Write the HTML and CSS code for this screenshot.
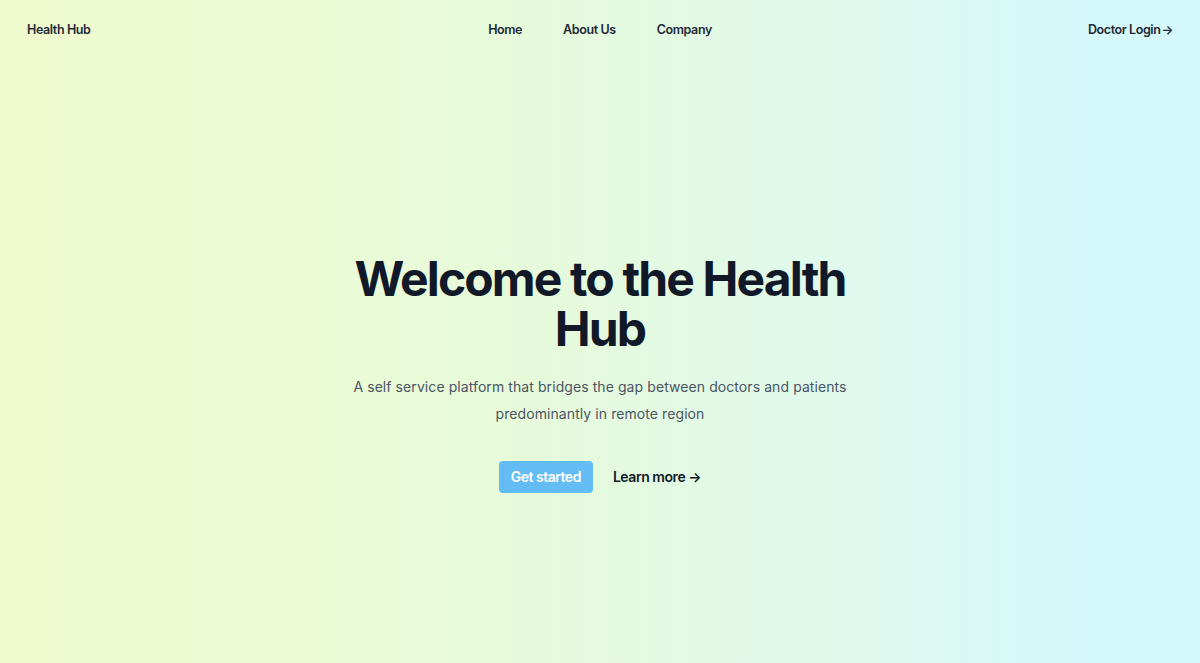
FILE: index.html
```html
<!DOCTYPE html>
<html lang="en">
<head>
<meta charset="utf-8">
<title>Health Hub</title>
<link rel="stylesheet" href="styles.css">
</head>
<body>
<div class="page">
  <header class="nav">
    <a class="brand" href="#">Health Hub</a>
    <nav class="links">
      <a href="#">Home</a>
      <a href="#">About Us</a>
      <a href="#">Company</a>
    </nav>
    <a class="login" href="#">Doctor Login<span class="arrow">→</span></a>
  </header>
  <main class="hero">
    <h1 class="title"><span class="line">Welcome to the Health</span><span class="line">Hub</span></h1>
    <p class="lead">A self service platform that bridges the gap between doctors and patients predominantly in remote region</p>
    <div class="actions">
      <a class="btn" href="#">Get started</a>
      <a class="more" href="#">Learn more <span>→</span></a>
    </div>
  </main>
</div>
</body>
</html>
```

FILE: styles.css
```css
* { box-sizing: border-box; }
html, body { margin: 0; padding: 0; height: 100%; }
body {
  font-family: Inter, "Noto Sans", sans-serif;
  color: #111827;
  background: linear-gradient(90deg, #effacd 0%, #eefbd2 11%, #e6fadb 45%, #dff9ec 70%, #d6f8fa 90%, #d4f8fc 100%);
}
a { text-decoration: none; color: inherit; }
.page { height: 663px; display: flex; flex-direction: column; }
.nav {
  display: flex;
  align-items: center;
  justify-content: space-between;
  padding: 19px 27px 17px;
  font-size: 12.5px;
  font-weight: 600;
  letter-spacing: -0.4px;
  line-height: 22px;
  color: #1f2937;
}
.brand, .login { flex: 1; }
.login { text-align: right; }
.links { display: flex; gap: 41px; }
.arrow { margin-left: 1px; }
.hero {
  display: flex;
  flex-direction: column;
  align-items: center;
  text-align: center;
  padding-top: 196px;
}
.title {
  margin: 0;
  display: flex;
  flex-direction: column;
  align-items: center;
  font-size: 48px;
  line-height: 50px;
  font-weight: 700;
  letter-spacing: -1.85px;
  color: #111827;
}
.line { display: block; }
.lead {
  margin: 19px 0 0;
  width: 520px;
  font-size: 14px;
  letter-spacing: 0.08px;
  line-height: 27px;
  color: #4b5563;
}
.actions {
  margin-top: 34px;
  display: flex;
  align-items: center;
  gap: 20px;
}
.btn {
  background: #63bcf4;
  color: #fff;
  font-size: 14px;
  font-weight: 600;
  letter-spacing: -0.5px;
  line-height: 20px;
  padding: 6px 12px;
  border-radius: 4px;
}
.more {
  font-size: 14px;
  font-weight: 600;
  letter-spacing: -0.45px;
  line-height: 20px;
  color: #111827;
}
```
